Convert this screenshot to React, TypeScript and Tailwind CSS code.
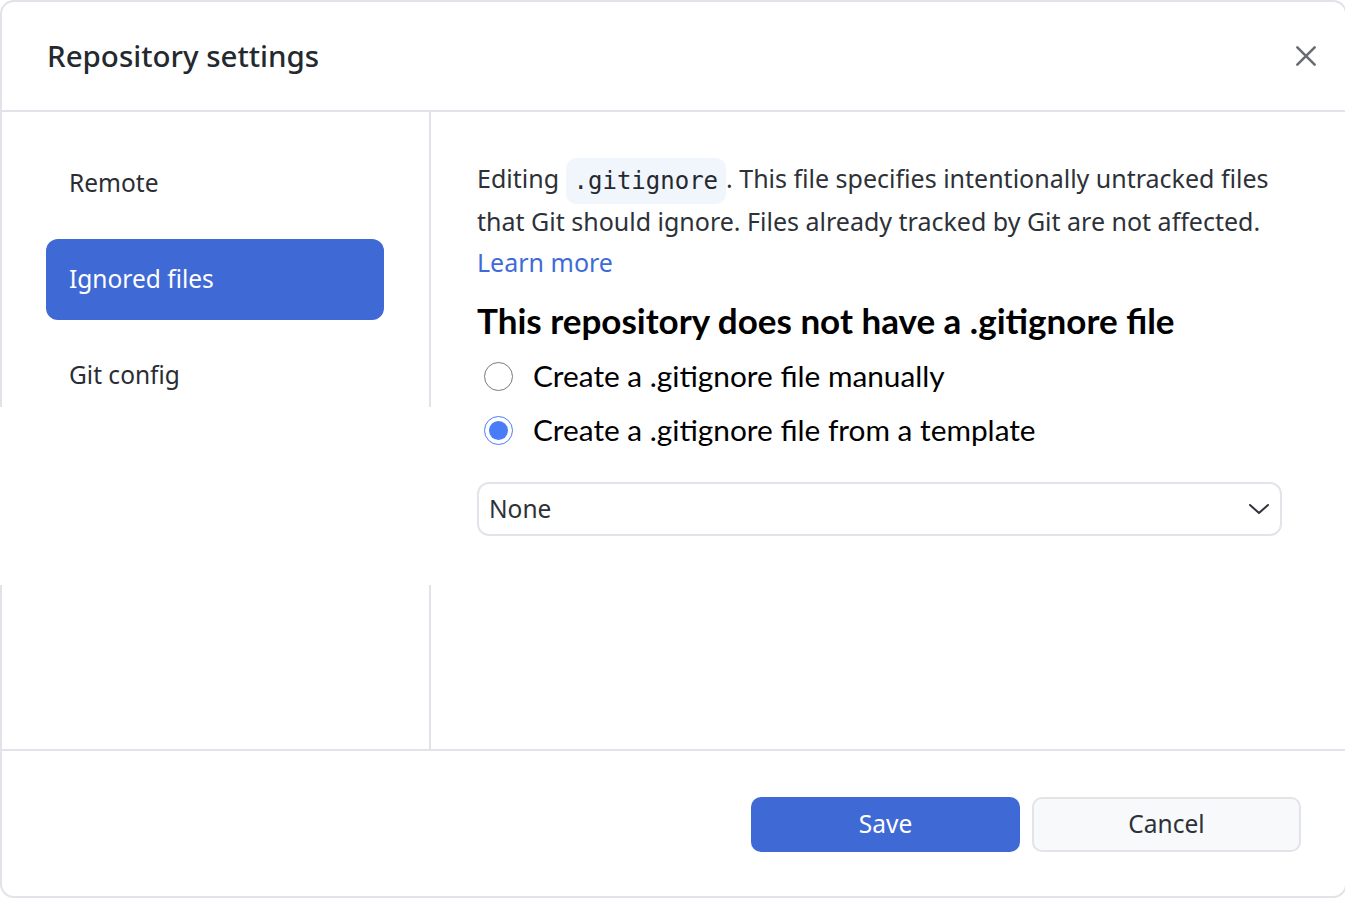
const navItems = ["Remote", "Ignored files", "Git config"]

function Radio({ checked }: { checked: boolean }) {
  if (checked) {
    return (
      <span className="flex h-[29px] w-[29px] shrink-0 items-center justify-center rounded-full border-[1.5px] border-[#4a7cf7] bg-white">
        <span className="h-[19px] w-[19px] rounded-full bg-[#4a7cf7]" />
      </span>
    )
  }
  return <span className="h-[29px] w-[29px] shrink-0 rounded-full border-[1.5px] border-[#7a7a7a] bg-white" />
}

export default function App() {
  return (
    <div className="relative h-[900px] w-[1345px] overflow-hidden bg-white" style={{ fontFamily: '"Noto Sans", "Open Sans", sans-serif' }}>
      <div className="flex h-[898px] w-[1347px] flex-col rounded-[14px] border-2 border-[#e2e2e8] bg-white">
        {/* Header */}
        <div className="flex h-[110px] shrink-0 items-center justify-between border-b-2 border-[#e2e2e8] pl-[45px] pr-[26px]">
          <h1 className="text-[29.5px] font-medium text-[#24292f]">Repository settings</h1>
          <svg width="26" height="26" viewBox="0 0 24 24" fill="none" stroke="#676d75" strokeWidth="2.4" strokeLinecap="round">
            <path d="M4 4L20 20M20 4L4 20" />
          </svg>
        </div>

        {/* Body */}
        <div className="flex h-[637px] shrink-0">
          <nav className="flex w-[429px] flex-col gap-[15px] border-r-2 border-[#e2e2e8] pl-[44px] pr-[45px] pt-[31px]">
            {navItems.map((item) => (
              <div
                key={item}
                className={`flex h-[81px] items-center rounded-[12px] px-[23px] text-[24.5px] ${
                  item === "Ignored files" ? "bg-[#3f69d5] text-white" : "text-[#2a2e34]"
                }`}
              >
                {item}
              </div>
            ))}
          </nav>

          <div className="flex-1 pl-[46px] pr-[63px] pt-[46px]">
            <p className="text-[25px] leading-[40.5px] text-[#2d3138]">
              Editing{" "}
              <code
                className="inline-block -my-[3px] h-[46px] rounded-[10px] bg-[#f1f5fc] px-[8px] align-middle text-[24px] leading-[46px] text-[#24292f]"
                style={{ fontFamily: '"DejaVu Sans Mono", "Liberation Mono", monospace' }}
              >
                .gitignore
              </code>
              . This file specifies intentionally untracked files that Git should ignore. Files already tracked by Git are not affected.{" "}
              <br />
              <span className="text-[#3f6bd6]">Learn more</span>
            </p>

            <h2 className="mt-[15px] text-[35px] font-bold leading-[46px] text-black" style={{ fontFamily: 'Lato, "Noto Sans", sans-serif' }}>
              This repository does not have a .gitignore file
            </h2>

            <div className="mt-[6px] flex flex-col" style={{ fontFamily: 'Lato, "Noto Sans", sans-serif' }}>
              <label className="flex h-[54px] items-center gap-[20px] pl-[7px] text-[29.8px] text-black">
                <Radio checked={false} />
                Create a .gitignore file manually
              </label>
              <label className="relative z-20 flex h-[54px] items-center gap-[20px] pl-[7px] text-[29.8px] text-black">
                <Radio checked />
                Create a .gitignore file from a template
              </label>
            </div>

            <div className="text-[20px] leading-[25px] text-[#2d3138]">Template</div>

            <div className="relative z-20 flex h-[54px] items-center justify-between rounded-[12px] border-2 border-[#e3e3ea] bg-white pl-[10px] pr-[10px] text-[24.5px] text-[#2d3138]">
              <span>None</span>
              <svg width="22" height="14" viewBox="0 0 22 14" fill="none" stroke="#303339" strokeWidth="2" strokeLinecap="round" strokeLinejoin="round">
                <path d="M2 3L11 11L20 3" />
              </svg>
            </div>
          </div>
        </div>

        {/* Footer */}
        <div className="flex flex-1 items-start justify-end gap-[12px] border-t-2 border-[#e2e2e8] pr-[44px] pt-[46px]">
          <button className="h-[55px] w-[269px] rounded-[10px] bg-[#3f69d5] text-[24.5px] text-white">Save</button>
          <button className="h-[55px] w-[269px] rounded-[10px] border-2 border-[#e3e4e8] bg-[#f8f9fb] text-[24.5px] text-[#2d3138]">Cancel</button>
        </div>
      </div>

      {/* repaint band over the dialog */}
      <div className="absolute left-0 top-[407px] z-10 h-[178px] w-[1300px] bg-white" />
    </div>
  )
}
